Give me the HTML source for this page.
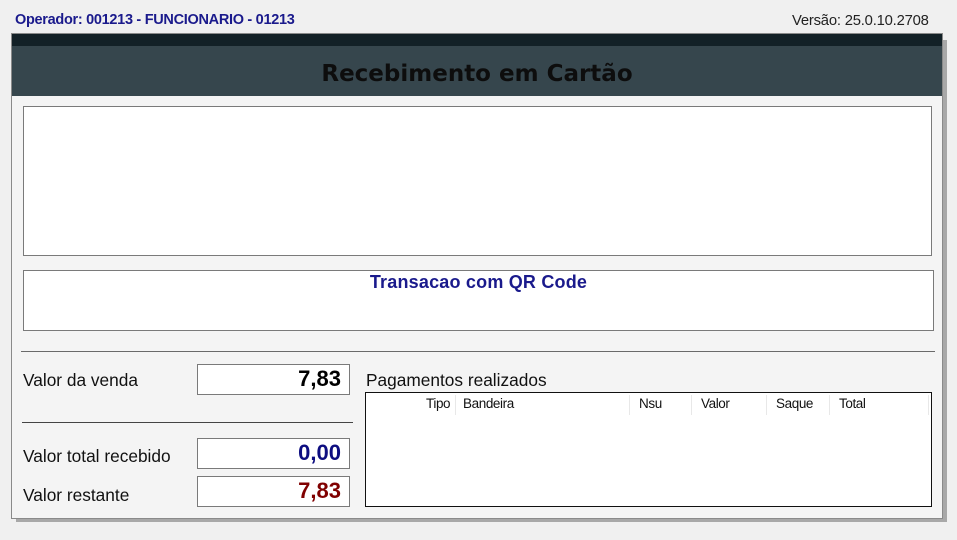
<!DOCTYPE html>
<html><head><meta charset="utf-8"><style>
*{margin:0;padding:0;box-sizing:border-box}
body{width:957px;height:540px;background:#f0f0f0;position:relative;overflow:hidden;font-family:"Liberation Sans",sans-serif}
.a{position:absolute}
.box{position:absolute;background:#fff;border:1px solid #7a7a7a}
.lbl{position:absolute;font-size:17.3px;color:#111}
.val{position:absolute;background:#fff;border:1px solid #7a7a7a;text-align:right;font-weight:bold;font-size:22px;padding-right:8px;line-height:27px}
.h{position:absolute;top:3px;font-size:13.5px;color:#111;letter-spacing:-0.4px}
.sep{position:absolute;top:2px;width:1px;height:20px;background:#e8e8e8}
</style></head><body>
<div class="a" style="left:15px;top:12px;font-size:14.5px;font-weight:bold;color:#1a1a8c;letter-spacing:-0.3px">Operador: 001213 - FUNCIONARIO - 01213</div>
<div class="a" style="left:792px;top:13px;font-size:14.8px;color:#222;letter-spacing:-0.2px">Versão: 25.0.10.2708</div>
<div class="a" style="left:16px;top:40px;width:931px;height:482px;background:#a8a8a8"></div>
<div class="a" style="left:11px;top:33px;width:932px;height:486px;background:#f4f4f4;border:1px solid #8a8a8a"></div>
<div class="a" style="left:12px;top:34px;width:930px;height:12px;background:#132127"></div>
<div class="a" style="left:12px;top:46px;width:930px;height:50px;background:#36464d;text-align:center;font-family:'DejaVu Sans',sans-serif;font-size:23px;font-weight:bold;line-height:56px;color:#0d0d0d">Recebimento em Cartão</div>
<div class="box" style="left:23px;top:106px;width:909px;height:150px"></div>
<div class="box" style="left:23px;top:270px;width:911px;height:61px;text-align:center;font-weight:bold;font-size:18px;color:#1a1a8c;padding-top:1px;letter-spacing:0.2px">Transacao com QR Code</div>
<div class="a" style="left:21px;top:351px;width:914px;height:1px;background:#6a6a6a"></div>
<div class="lbl" style="left:23px;top:370px">Valor da venda</div>
<div class="val" style="left:197px;top:364px;width:153px;height:31px;color:#000">7,83</div>
<div class="a" style="left:22px;top:422px;width:331px;height:1px;background:#444"></div>
<div class="lbl" style="left:23px;top:446px">Valor total recebido</div>
<div class="val" style="left:197px;top:438px;width:153px;height:31px;color:#0d0d80">0,00</div>
<div class="lbl" style="left:23px;top:485px">Valor restante</div>
<div class="val" style="left:197px;top:476px;width:153px;height:31px;color:#800000">7,83</div>
<div class="lbl" style="left:366px;top:370px">Pagamentos realizados</div>
<div class="a" style="left:365px;top:392px;width:567px;height:115px;background:#fff;border:1px solid #111">
<div class="h" style="left:60px">Tipo</div><div class="sep" style="left:89px"></div>
<div class="h" style="left:97px">Bandeira</div><div class="sep" style="left:263px"></div>
<div class="h" style="left:273px">Nsu</div><div class="sep" style="left:325px"></div>
<div class="h" style="left:335px">Valor</div><div class="sep" style="left:400px"></div>
<div class="h" style="left:410px">Saque</div><div class="sep" style="left:463px"></div>
<div class="h" style="left:473px">Total</div><div class="sep" style="left:562px"></div>
</div>
</body></html>
